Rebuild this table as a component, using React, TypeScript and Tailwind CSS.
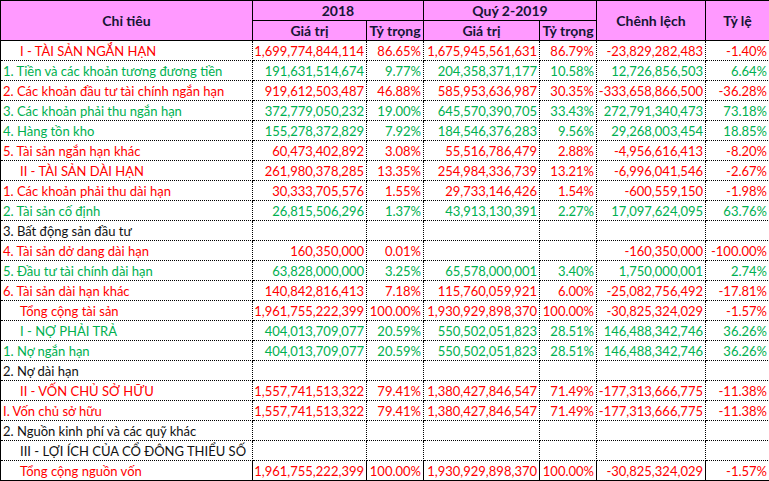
type Tone = "red" | "green" | "black";

type Row = {
  label: string;
  tone: Tone;
  indent?: boolean;
  values?: [string, string, string, string, string, string];
};

const rows: Row[] = [
  { label: "I - TÀI SẢN NGẮN HẠN", tone: "red", indent: true, values: ["1,699,774,844,114", "86.65%", "1,675,945,561,631", "86.79%", "-23,829,282,483", "-1.40%"] },
  { label: "1. Tiền và các khoản tương đương tiền", tone: "green", values: ["191,631,514,674", "9.77%", "204,358,371,177", "10.58%", "12,726,856,503", "6.64%"] },
  { label: "2. Các khoản đầu tư tài chính ngắn hạn", tone: "red", values: ["919,612,503,487", "46.88%", "585,953,636,987", "30.35%", "-333,658,866,500", "-36.28%"] },
  { label: "3. Các khoản phải thu ngắn hạn", tone: "green", values: ["372,779,050,232", "19.00%", "645,570,390,705", "33.43%", "272,791,340,473", "73.18%"] },
  { label: "4. Hàng tồn kho", tone: "green", values: ["155,278,372,829", "7.92%", "184,546,376,283", "9.56%", "29,268,003,454", "18.85%"] },
  { label: "5. Tài sản ngắn hạn khác", tone: "red", values: ["60,473,402,892", "3.08%", "55,516,786,479", "2.88%", "-4,956,616,413", "-8.20%"] },
  { label: "II - TÀI SẢN DÀI HẠN", tone: "red", indent: true, values: ["261,980,378,285", "13.35%", "254,984,336,739", "13.21%", "-6,996,041,546", "-2.67%"] },
  { label: "1. Các khoản phải thu dài hạn", tone: "red", values: ["30,333,705,576", "1.55%", "29,733,146,426", "1.54%", "-600,559,150", "-1.98%"] },
  { label: "2. Tài sản cố định", tone: "green", values: ["26,815,506,296", "1.37%", "43,913,130,391", "2.27%", "17,097,624,095", "63.76%"] },
  { label: "3. Bất động sản đầu tư", tone: "black" },
  { label: "4. Tài sản dở dang dài hạn", tone: "red", values: ["160,350,000", "0.01%", "", "", "-160,350,000", "-100.00%"] },
  { label: "5. Đầu tư tài chính dài hạn", tone: "green", values: ["63,828,000,000", "3.25%", "65,578,000,001", "3.40%", "1,750,000,001", "2.74%"] },
  { label: "6. Tài sản dài hạn khác", tone: "red", values: ["140,842,816,413", "7.18%", "115,760,059,921", "6.00%", "-25,082,756,492", "-17.81%"] },
  { label: "Tổng cộng tài sản", tone: "red", indent: true, values: ["1,961,755,222,399", "100.00%", "1,930,929,898,370", "100.00%", "-30,825,324,029", "-1.57%"] },
  { label: "I - NỢ PHẢI TRẢ", tone: "green", indent: true, values: ["404,013,709,077", "20.59%", "550,502,051,823", "28.51%", "146,488,342,746", "36.26%"] },
  { label: "1. Nợ ngắn hạn", tone: "green", values: ["404,013,709,077", "20.59%", "550,502,051,823", "28.51%", "146,488,342,746", "36.26%"] },
  { label: "2. Nợ dài hạn", tone: "black" },
  { label: "II - VỐN CHỦ SỞ HỮU", tone: "red", indent: true, values: ["1,557,741,513,322", "79.41%", "1,380,427,846,547", "71.49%", "-177,313,666,775", "-11.38%"] },
  { label: "I. Vốn chủ sở hữu", tone: "red", values: ["1,557,741,513,322", "79.41%", "1,380,427,846,547", "71.49%", "-177,313,666,775", "-11.38%"] },
  { label: "2. Nguồn kinh phí và các quỹ khác", tone: "black" },
  { label: "III - LỢI ÍCH CỦA CỔ ĐÔNG THIỂU SỐ", tone: "black", indent: true },
  { label: "Tổng cộng nguồn vốn", tone: "red", indent: true, values: ["1,961,755,222,399", "100.00%", "1,930,929,898,370", "100.00%", "-30,825,324,029", "-1.57%"] },
];

const toneClass: Record<Tone, string> = {
  red: "text-[#ff0000]",
  green: "text-[#00b050]",
  black: "text-[#111111]",
};

const head =
  "bg-[#ff99ff] font-bold text-[14px] text-[#151535] border-r border-b border-black flex items-center justify-center";

export default function App() {
  return (
    <div className="w-[769px] h-[481px] bg-white font-['Lato',sans-serif] text-[13px] leading-[20px]">
      <div className="grid grid-cols-[252px_114px_57px_116px_57px_109px_64px] grid-rows-[20px_20px] border-l border-t border-black">
        <div className={`${head} row-span-2`}>Chỉ tiêu</div>
        <div className={`${head} col-span-2`}>2018</div>
        <div className={`${head} col-span-2`}>Quý 2-2019</div>
        <div className={`${head} row-span-2`}>Chênh lệch</div>
        <div className={`${head} row-span-2`}>Tỷ lệ</div>
        <div className={head}>Giá trị</div>
        <div className={head}>Tỷ trọng</div>
        <div className={head}>Giá trị</div>
        <div className={head}>Tỷ trọng</div>

        {rows.map((row, i) => {
          const last = i === rows.length - 1;
          const line = last ? "border-b border-solid" : "border-b border-dotted";
          const color = toneClass[row.tone];
          return (
            <div key={i} className="contents">
              <div
                className={`h-[20px] border-r border-r-black border-b-black ${line} ${color} whitespace-nowrap ${
                  row.indent ? "pl-[19px]" : "pl-[2px]"
                }`}
              >
                {row.label}
              </div>
              {(row.values ?? ["", "", "", "", "", ""]).map((v, j) => (
                <div
                  key={j}
                  className={`h-[20px] border-r border-r-black border-b-black ${line} ${color} whitespace-nowrap text-right pr-[2px] tabular-nums`}
                >
                  {v}
                </div>
              ))}
            </div>
          );
        })}
      </div>
    </div>
  );
}
